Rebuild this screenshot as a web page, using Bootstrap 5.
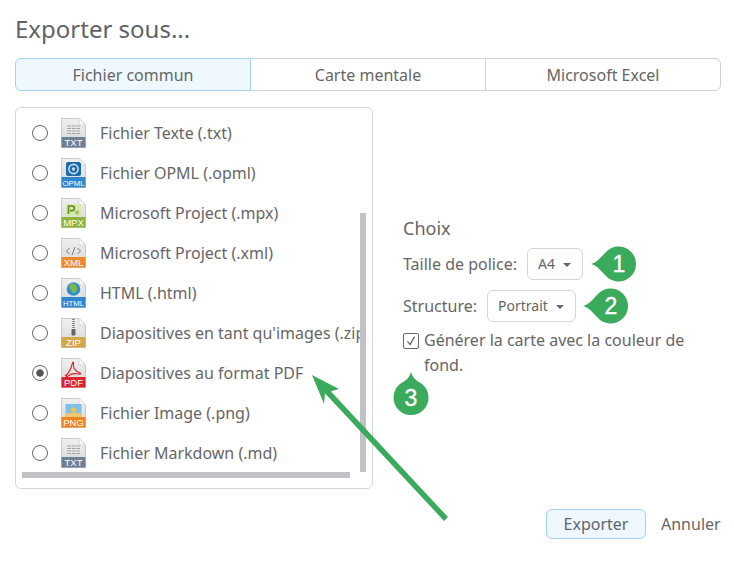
<!DOCTYPE html>
<html lang="fr">
<head>
  <meta charset="UTF-8">
  <meta name="viewport" content="width=device-width, initial-scale=1.0">
  <title>Exporter sous</title>
  <link href="https://cdn.jsdelivr.net/npm/bootstrap@5.3.0/dist/css/bootstrap.min.css" rel="stylesheet">
  <style>
    body { font-family: "Noto Sans", sans-serif; font-size: 16px; color: #666; background: #fff; }
    .export-page { position: relative; width: 734px; height: 561px; padding: 14px 13px 0 15px; overflow: hidden; }
    .export-title { font-size: 24px; font-weight: 400; line-height: 30px; margin: 0 0 14px; color: #5f6368; }

    .kind-tabs { height: 33px; }
    .kind-tabs .btn { font-size: 16px; color: #666; border-color: #d0d3d6; padding: 0; line-height: 30px; width: 33.333%; border-radius: 6px; }
    .kind-tabs .btn.is-on { background: #eff8ff; border-color: #a3d2f0; z-index: 1; }

    .export-body { margin-top: 16px; }
    .format-box { position: relative; width: 358px; height: 382px; flex: none; border: 1px solid #d3d5d8; border-radius: 6px; overflow: hidden; }
    .format-row { height: 40px; padding-left: 16px; gap: 13px; white-space: nowrap; width: 344px; overflow: hidden; }
    .format-row:first-child { margin-top: 5px; }
    .format-row svg { flex: none; }
    .format-row .form-check-input { width: 16px; height: 16px; margin: 0; flex: none; border-color: #666; background-color: #fff; box-shadow: none; }
    .format-row .form-check-input:checked { background-color: #fff; border-color: #666; background-image: radial-gradient(circle, #555 0 3.4px, transparent 4px); }
    .format-row .format-name { margin-left: 1px; line-height: 24px; }
    .bar-v { position: absolute; left: 344px; top: 105px; width: 6px; height: 259px; background: #c1c2c5; }
    .bar-h { position: absolute; left: 6px; top: 364px; width: 328px; height: 6px; background: #c1c2c5; }

    .choice-col { margin-left: 30px; padding-top: 108px; width: 300px; }
    .choice-title { font-size: 18px; line-height: 26px; margin-bottom: 7px; }
    .choice-line { height: 32px; margin-bottom: 10px; gap: 10px; }
    .pick-btn { font-size: 14px; color: #666; border: 1px solid #d3d5d8; border-radius: 6px; padding: 0 11px 0 10px; height: 32px; line-height: 30px; background: #fff; }
    .pick-btn::after { margin-left: 8px; vertical-align: 2px; border-top-width: 4px; border-left-width: 4px; border-right-width: 4px; }
    .bg-check { gap: 5px; line-height: 25px; margin-top: -4px; }
    .bg-check .form-check-input { width: 16px; height: 16px; margin: 5px 0 0; flex: none; border-color: #666; border-radius: 2px; background-color: #fff; box-shadow: none; background-size: 14px; background-image: url("data:image/svg+xml,%3csvg xmlns='http://www.w3.org/2000/svg' viewBox='0 0 16 16'%3e%3cpath fill='none' stroke='%23555' stroke-width='1.3' d='M4 8.5l3 3.500 5-9'/%3e%3c/svg%3e"); }

    .mark-pin { position: absolute; }
    .mark-pin text { font-family: "Liberation Sans", sans-serif; font-size: 23px; fill: #fff; stroke: #fff; stroke-width: .4; text-anchor: middle; }
    .pin-1 { left: 589px; top: 245px; }
    .pin-2 { left: 581px; top: 287px; }
    .pin-3 { left: 392px; top: 372px; }
    .big-arrow { position: absolute; left: 300px; top: 365px; }

    .export-foot { position: absolute; left: 546px; top: 508px; width: 175px; gap: 15px; }
    .go-btn { width: 100px; height: 30px; padding: 0; font-size: 16px; line-height: 26px; color: #5f6670; background: #eff8ff; border: 1px solid #a3d2f0; border-radius: 6px; }
    .stop-link { color: #666; text-decoration: none; line-height: 32px; }
    .doc-label { font-family: "Liberation Sans", sans-serif; font-size: 9.5px; fill: #fff; text-anchor: middle; }
    .doc-label-long { font-size: 7.8px; }
  </style>
</head>
<body>
  <svg width="0" height="0" class="position-absolute">
    <defs>
      <linearGradient id="sheet" x1="0" y1="0" x2="0" y2="1"><stop offset="0" stop-color="#f0f0f0"/><stop offset="1" stop-color="#d6d6d6"/></linearGradient>
      <symbol id="doc" viewBox="0 0 25 30">
        <path d="M.5.5H18L24.5 7V29.5H.5Z" fill="url(#sheet)" stroke="#c9c9c9"/>
        <path d="M18 .5V7H24.5Z" fill="#fff" stroke="#c9c9c9" stroke-width=".7"/>
      </symbol>
      <symbol id="lines" viewBox="0 0 25 30">
        <path d="M6 8h13M6 10.5h13M6 13h13M6 15.5h13" stroke="#a4a7aa" stroke-width="1" stroke-dasharray="4 .8"/>
      </symbol>
    </defs>
  </svg>

  <div class="export-page">
    <h1 class="export-title">Exporter sous...</h1>

    <div class="btn-group d-flex kind-tabs" role="group">
      <button type="button" class="btn is-on">Fichier commun</button>
      <button type="button" class="btn">Carte mentale</button>
      <button type="button" class="btn">Microsoft Excel</button>
    </div>

    <div class="export-body d-flex">
      <div class="format-box">
        <label class="format-row d-flex align-items-center">
          <input class="form-check-input" type="radio" name="fmt">
          <svg width="25" height="30" viewBox="0 0 25 30"><use href="#doc"/><use href="#lines"/><rect x=".5" y="19" width="24" height="10.5" fill="#6d8094"/><text class="doc-label" x="12.5" y="27.8">TXT</text></svg>
          <span class="format-name">Fichier Texte (.txt)</span>
        </label>
        <label class="format-row d-flex align-items-center">
          <input class="form-check-input" type="radio" name="fmt">
          <svg width="25" height="30" viewBox="0 0 25 30"><use href="#doc"/><rect x="5" y="4" width="15" height="14" rx="2" fill="#1e6aa8"/><circle cx="12.5" cy="11" r="4.6" fill="none" stroke="#bfe0f5" stroke-width="1.6"/><circle cx="12.5" cy="11" r="1.7" fill="#bfe0f5"/><rect x=".5" y="19" width="24" height="10.5" fill="#2f86cc"/><text class="doc-label doc-label-long" x="12.5" y="27.5">OPML</text></svg>
          <span class="format-name">Fichier OPML (.opml)</span>
        </label>
        <label class="format-row d-flex align-items-center">
          <input class="form-check-input" type="radio" name="fmt">
          <svg width="25" height="30" viewBox="0 0 25 30"><use href="#doc"/><rect x="5" y="6" width="15" height="12" rx="1" fill="#d7e8b0"/><path d="M7.5 16V8h3.600a2.200 2.200 0 0 1 0 4.600H9" fill="none" stroke="#5f8a1f" stroke-width="1.6"/><circle cx="16" cy="14.5" r="2.2" fill="#a8c86a"/><rect x=".5" y="19" width="24" height="10.5" fill="#8cb43c"/><text class="doc-label" x="12.5" y="27.8">MPX</text></svg>
          <span class="format-name">Microsoft Project (.mpx)</span>
        </label>
        <label class="format-row d-flex align-items-center">
          <input class="form-check-input" type="radio" name="fmt">
          <svg width="25" height="30" viewBox="0 0 25 30"><use href="#doc"/><path d="M8.5 10l-3 3 3 3M16.500 10l3 3-3 3M14 9l-3 8" fill="none" stroke="#777" stroke-width="1"/><rect x=".5" y="19" width="24" height="10.5" fill="#ee8a2c"/><text class="doc-label" x="12.5" y="27.8">XML</text></svg>
          <span class="format-name">Microsoft Project (.xml)</span>
        </label>
        <label class="format-row d-flex align-items-center">
          <input class="form-check-input" type="radio" name="fmt">
          <svg width="25" height="30" viewBox="0 0 25 30"><use href="#doc"/><circle cx="12.5" cy="11" r="6.8" fill="#2f8fd0"/><path d="M9 6c3-1.500 6 0 7 3s-1 5-3 6-2-2-3-3-3-4-1-6Z" fill="#7ab648"/><rect x=".5" y="19" width="24" height="10.5" fill="#2f86cc"/><text class="doc-label doc-label-long" x="12.5" y="27.5">HTML</text></svg>
          <span class="format-name">HTML (.html)</span>
        </label>
        <label class="format-row d-flex align-items-center">
          <input class="form-check-input" type="radio" name="fmt">
          <svg width="25" height="30" viewBox="0 0 25 30"><use href="#doc"/><path d="M12.5 1v10" stroke="#777" stroke-width="2.5" stroke-dasharray="1 1"/><rect x="10.5" y="11" width="4" height="6.5" rx="1" fill="#666"/><rect x=".5" y="19" width="24" height="10.5" fill="#d2a848"/><text class="doc-label" x="12.5" y="27.8">ZIP</text></svg>
          <span class="format-name">Diapositives en tant qu'images (.zip)</span>
        </label>
        <label class="format-row d-flex align-items-center">
          <input class="form-check-input" type="radio" name="fmt" checked>
          <svg width="25" height="30" viewBox="0 0 25 30"><use href="#doc"/><path d="M5 17c3-2 5-6 6.500-12 .5-2 1.500-.5 1 1.500-.5 3 2 7 6.500 8.500 1.500.5.500 1.500-1 1-5-1-9 .5-11 2-1.500 1-3 0-1-1Z" fill="none" stroke="#d9232e" stroke-width="1.1"/><rect x=".5" y="19" width="24" height="10.5" fill="#db2430"/><text class="doc-label" x="12.5" y="27.8">PDF</text></svg>
          <span class="format-name">Diapositives au format PDF</span>
        </label>
        <label class="format-row d-flex align-items-center">
          <input class="form-check-input" type="radio" name="fmt">
          <svg width="25" height="30" viewBox="0 0 25 30"><use href="#doc"/><rect x="4.5" y="6" width="16" height="13" fill="#7fc1ea"/><circle cx="12.5" cy="12" r="2.8" fill="#f4c23c"/><rect x="4.5" y="15" width="16" height="4" fill="#e9c878"/><rect x=".5" y="19" width="24" height="10.5" fill="#f0851f"/><text class="doc-label" x="12.5" y="27.8">PNG</text></svg>
          <span class="format-name">Fichier Image (.png)</span>
        </label>
        <label class="format-row d-flex align-items-center">
          <input class="form-check-input" type="radio" name="fmt">
          <svg width="25" height="30" viewBox="0 0 25 30"><use href="#doc"/><use href="#lines"/><rect x=".5" y="19" width="24" height="10.5" fill="#6d8094"/><text class="doc-label" x="12.5" y="27.8">TXT</text></svg>
          <span class="format-name">Fichier Markdown (.md)</span>
        </label>
        <div class="bar-v"></div>
        <div class="bar-h"></div>
      </div>

      <div class="choice-col">
        <div class="choice-title">Choix</div>
        <div class="choice-line d-flex align-items-center">
          <span>Taille de police:</span>
          <button type="button" class="btn pick-btn dropdown-toggle">A4</button>
        </div>
        <div class="choice-line d-flex align-items-center">
          <span>Structure:</span>
          <button type="button" class="btn pick-btn dropdown-toggle">Portrait</button>
        </div>
        <label class="bg-check d-flex">
          <input class="form-check-input" type="checkbox" checked>
          <span>Générer la carte avec la couleur de fond.</span>
        </label>
      </div>
    </div>

    <svg class="mark-pin pin-1" width="48" height="38" viewBox="0 0 48 38"><path d="M2 19C8 17.5 12 12 16 7.900A17.500 17.500 0 1 1 16 30.100C12 26 8 20.500 2 19Z" fill="#3aaa5c"/><text x="30" y="27">1</text></svg>
    <svg class="mark-pin pin-2" width="48" height="38" viewBox="0 0 48 38"><path d="M2 19C8 17.5 12 12 16 7.900A17.500 17.500 0 1 1 16 30.100C12 26 8 20.500 2 19Z" fill="#3aaa5c"/><text x="30" y="27">2</text></svg>
    <svg class="mark-pin pin-3" width="38" height="46" viewBox="0 0 38 46"><path d="M19 0C20.500 6 25 9 30 12A17.500 17.500 0 1 1 8 12C13 9 17.500 6 19 0Z" fill="#3aaa5c"/><text x="19" y="34">3</text></svg>

    <svg class="big-arrow" width="160" height="165" viewBox="0 0 160 165"><path d="M146 154L22 21" stroke="#3aaa5c" stroke-width="5.5" fill="none"/><path d="M12 10L39 24 25 28 24 39Z" fill="#3aaa5c"/></svg>

    <div class="export-foot d-flex align-items-center">
      <button type="button" class="btn go-btn">Exporter</button>
      <a href="#" class="stop-link">Annuler</a>
    </div>
  </div>
  <script src="https://cdn.jsdelivr.net/npm/bootstrap@5.3.0/dist/js/bootstrap.bundle.min.js"></script>
</body>
</html>
